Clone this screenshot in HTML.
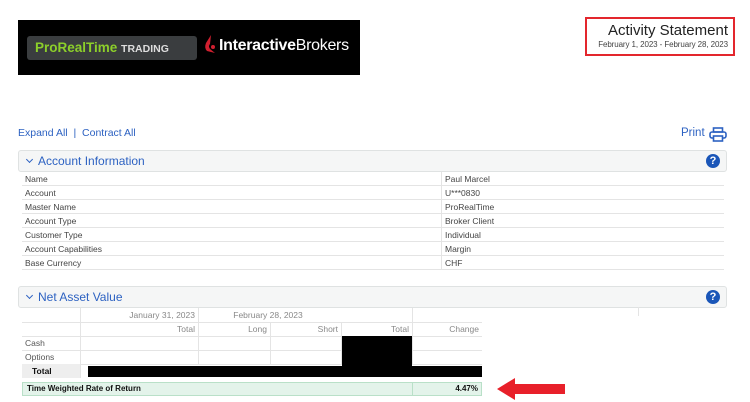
<!DOCTYPE html>
<html><head><style>
*{margin:0;padding:0;box-sizing:border-box}
body{width:750px;height:402px;background:#fff;font-family:"Liberation Sans",sans-serif;position:relative;overflow:hidden;color:#444}
.a{position:absolute}
.hdr{position:absolute;left:18px;width:709px;height:22px;background:#f5f6f6;border:1px solid #dfe2e2;border-radius:3px}
.hdr span{position:absolute;left:19px;top:3px;font-size:12px;color:#2d62c2}
.hdr i{position:absolute;left:8px;top:6px;width:5px;height:5px;border-right:1.6px solid #2d62c2;border-bottom:1.6px solid #2d62c2;transform:rotate(45deg)}
.q{position:absolute;right:6px;top:3px;width:14px;height:14px;border-radius:50%;background:#1a56b8;color:#fff;font-size:11px;font-weight:bold;text-align:center;line-height:14px}
.row{position:absolute;left:22px;width:702px;height:14px;border-bottom:1px solid #e4e4e4;font-size:8.5px;line-height:14px}
.row span{position:absolute;left:3px}.row b{position:absolute;left:419px;font-weight:normal;padding-left:3px;border-left:1px solid #e4e4e4;height:14px}
.c{position:absolute;font-size:8.5px;color:#888;text-align:right;line-height:14px}
.hl{position:absolute;height:1px;background:#e4e4e4}
.vl{position:absolute;width:1px;background:#e4e4e4}
</style></head><body>
<div class="a" style="left:18px;top:20px;width:342px;height:55px;background:#000"></div>
<div class="a" style="left:27px;top:36px;width:170px;height:24px;background:#3a3d3f;border-radius:3px;font-weight:bold;font-size:13.5px;line-height:24px;padding-left:8px;color:#8ccf2a">ProRealTime <span style="color:#ddd;font-size:10.5px">TRADING</span></div>
<svg class="a" style="left:203px;top:35px" width="14" height="20" viewBox="0 0 14 20"><path d="M8 0 L3 8 Q1 13 4 16 L12 18 L7 14 Q5 11 7 9 Z" fill="#d01f2f"/><circle cx="10" cy="12" r="2" fill="#d01f2f"/></svg>
<div class="a" style="left:219px;top:37px;color:#fff;font-size:16px;letter-spacing:-0.3px"><b>Interactive</b>Brokers</div>
<div class="a" style="left:585px;top:17px;width:150px;height:39px;border:2px solid #e3262d"></div>
<div class="a" style="left:590px;top:22px;width:138px;text-align:right;font-size:15px;color:#222">Activity Statement</div>
<div class="a" style="left:586px;top:40px;width:142px;text-align:right;font-size:8px;color:#444;letter-spacing:-0.1px">February 1, 2023 - February 28, 2023</div>
<div class="a" style="left:18px;top:127px;font-size:10.5px;color:#2d62c2">Expand All &nbsp;|&nbsp; Contract All</div>
<div class="a" style="left:681px;top:127px;font-size:11.5px;color:#2d62c2">Print</div>
<svg class="a" style="left:709px;top:127px" width="18" height="15" viewBox="0 0 18 15" fill="none" stroke="#2d62c2" stroke-width="1.6"><rect x="4.5" y="1" width="9" height="4"/><rect x="1" y="5" width="16" height="6" rx="2"/><rect x="4.5" y="9" width="9" height="5" fill="#fff"/></svg>
<div class="hdr" style="top:150px"><i></i><span>Account Information</span><div class="q">?</div></div>
<div class="row" style="top:172px"><span>Name</span><b>Paul Marcel</b></div>
<div class="row" style="top:186px"><span>Account</span><b>U***0830</b></div>
<div class="row" style="top:200px"><span>Master Name</span><b>ProRealTime</b></div>
<div class="row" style="top:214px"><span>Account Type</span><b>Broker Client</b></div>
<div class="row" style="top:228px"><span>Customer Type</span><b>Individual</b></div>
<div class="row" style="top:242px"><span>Account Capabilities</span><b>Margin</b></div>
<div class="row" style="top:256px"><span>Base Currency</span><b>CHF</b></div>
<div class="hdr" style="top:286px"><i></i><span>Net Asset Value</span><div class="q">?</div></div>
<div class="vl" style="left:638px;top:307px;height:9px"></div>
<div class="hl" style="left:22px;top:322px;width:460px"></div>
<div class="hl" style="left:22px;top:336px;width:460px"></div>
<div class="hl" style="left:22px;top:350px;width:460px"></div>
<div class="hl" style="left:22px;top:364px;width:460px"></div>
<div class="vl" style="left:80px;top:308px;height:70px"></div>
<div class="vl" style="left:198px;top:308px;height:56px"></div>
<div class="vl" style="left:270px;top:322px;height:42px"></div>
<div class="vl" style="left:341px;top:322px;height:42px"></div>
<div class="vl" style="left:412px;top:308px;height:56px"></div>
<div class="c" style="left:80px;top:308px;width:115px">January 31, 2023</div>
<div class="c" style="left:198px;top:308px;width:140px;text-align:center">February 28, 2023</div>
<div class="c" style="left:80px;top:322px;width:115px">Total</div>
<div class="c" style="left:198px;top:322px;width:69px">Long</div>
<div class="c" style="left:270px;top:322px;width:68px">Short</div>
<div class="c" style="left:341px;top:322px;width:68px">Total</div>
<div class="c" style="left:412px;top:322px;width:67px">Change</div>
<div class="c" style="left:25px;top:336px;text-align:left;color:#555">Cash</div>
<div class="c" style="left:25px;top:350px;text-align:left;color:#555">Options</div>
<div class="a" style="left:22px;top:364px;width:58px;height:14px;background:#eee;font-size:8.5px;font-weight:bold;color:#111;line-height:14px;padding-left:10px">Total</div>
<div class="a" style="left:342px;top:336px;width:70px;height:30px;background:#000"></div>
<div class="a" style="left:88px;top:366px;width:394px;height:11px;background:#000"></div>
<div class="a" style="left:22px;top:382px;width:460px;height:14px;background:#e3f3ea;border:1px solid #b9e0c8;font-size:8px;font-weight:bold;color:#111;line-height:12px;padding-left:4px">Time Weighted Rate of Return</div>
<div class="vl" style="left:412px;top:382px;height:14px;background:#b9e0c8"></div>
<div class="a" style="left:412px;top:383px;width:66px;text-align:right;font-size:8px;font-weight:bold;color:#111;line-height:12px">4.47%</div>
<svg class="a" style="left:496px;top:377px" width="70" height="24" viewBox="0 0 70 24"><path d="M1 12 L19 1 L19 7 L69 7 L69 17 L19 17 L19 23 Z" fill="#e8202a"/></svg>
</body></html>
